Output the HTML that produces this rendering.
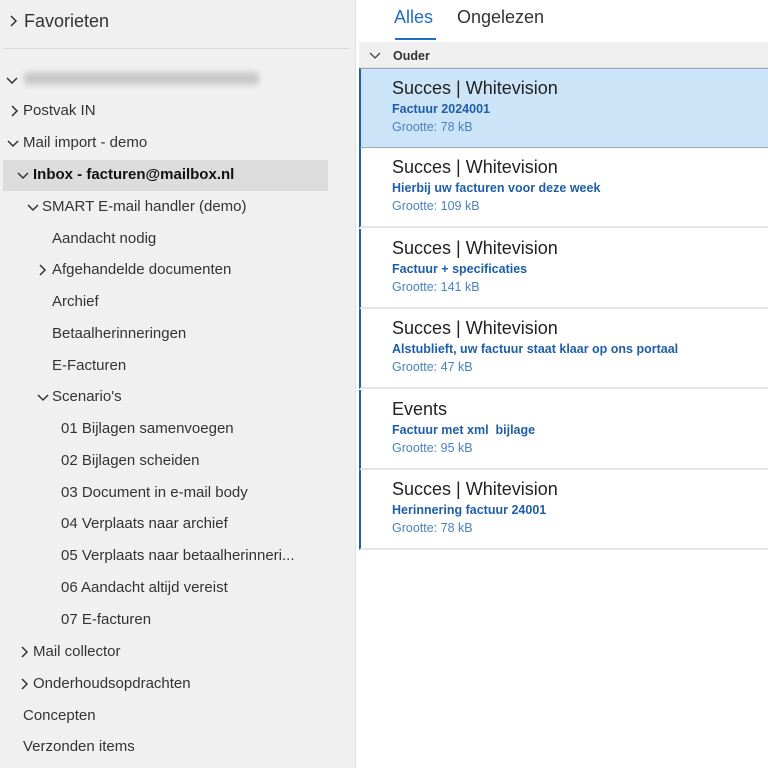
<!DOCTYPE html>
<html><head><meta charset="utf-8"><style>
*{margin:0;padding:0;box-sizing:border-box}
body{width:768px;height:768px;overflow:hidden;background:#fff;font-family:"Liberation Sans",sans-serif;position:relative}
#left{position:absolute;left:0;top:0;width:355px;height:768px;background:#f0f0f0}
.r{position:absolute;font-size:15px;color:#333;white-space:nowrap;line-height:20px}
.c{position:absolute;width:12px;height:12px}
#right{position:absolute;left:355px;top:0;width:413px;height:768px;background:#fff;border-left:1px solid #e0e0e0}
.it{position:absolute;left:3px;width:410px;height:80px;border-left:2px solid #1f5ea8;border-bottom:2px solid #e6e6e6;background:#fff}
.it .a{position:absolute;left:31px;top:9px;font-size:18px;color:#222}
.it .b{position:absolute;left:31px;top:33px;font-size:12.5px;font-weight:bold;color:#1f5ea8}
.it .g{position:absolute;left:31px;top:51px;font-size:12.5px;color:#4a82c0}
</style></head><body>
<div id="left">
<svg width="0" height="0" style="position:absolute"><defs>
<path id="rt" d="M3 1 L8 6 L3 11" fill="none" stroke="#333" stroke-width="1.5"/>
<path id="dn" d="M1 4 L6 9 L11 4" fill="none" stroke="#333" stroke-width="1.5"/>
</defs></svg>
<svg class="c" style="left:8px;top:15px"><use href="#rt"/></svg>
<div class="r" style="left:24px;top:11px;font-size:18px">Favorieten</div>
<div style="position:absolute;left:3px;top:48px;width:347px;height:1px;background:#d8d8d8"></div>
<svg class="c" style="left:6px;top:74px"><use href="#dn"/></svg>
<div style="position:absolute;left:24px;top:72px;width:235px;height:13px;background:#c9c9c9;filter:blur(3px);border-radius:4px"></div>
<svg class="c" style="left:9px;top:105px"><use href="#rt"/></svg><div class="r" style="left:23px;top:101px">Postvak IN</div>
<svg class="c" style="left:7px;top:137px"><use href="#dn"/></svg><div class="r" style="left:23px;top:133px">Mail import - demo</div>
<div style="position:absolute;left:3px;top:160px;width:325px;height:31px;background:#dcdcdc"></div>
<svg class="c" style="left:17px;top:169px"><use href="#dn"/></svg><div class="r" style="left:33px;top:165px;font-weight:bold;color:#111">Inbox - facturen@mailbox.nl</div>
<svg class="c" style="left:27px;top:201px"><use href="#dn"/></svg><div class="r" style="left:42px;top:197px">SMART E-mail handler (demo)</div>
<div class="r" style="left:52px;top:229px">Aandacht nodig</div>
<svg class="c" style="left:37px;top:264px"><use href="#rt"/></svg><div class="r" style="left:52px;top:260px">Afgehandelde documenten</div>
<div class="r" style="left:52px;top:292px">Archief</div>
<div class="r" style="left:52px;top:324px">Betaalherinneringen</div>
<div class="r" style="left:52px;top:356px">E-Facturen</div>
<svg class="c" style="left:37px;top:391px"><use href="#dn"/></svg><div class="r" style="left:52px;top:387px">Scenario's</div>
<div class="r" style="left:61px;top:419px">01 Bijlagen samenvoegen</div>
<div class="r" style="left:61px;top:451px">02 Bijlagen scheiden</div>
<div class="r" style="left:61px;top:483px">03 Document in e-mail body</div>
<div class="r" style="left:61px;top:514px">04 Verplaats naar archief</div>
<div class="r" style="left:61px;top:546px">05 Verplaats naar betaalherinneri...</div>
<div class="r" style="left:61px;top:578px">06 Aandacht altijd vereist</div>
<div class="r" style="left:61px;top:610px">07 E-facturen</div>
<svg class="c" style="left:19px;top:646px"><use href="#rt"/></svg><div class="r" style="left:33px;top:642px">Mail collector</div>
<svg class="c" style="left:19px;top:678px"><use href="#rt"/></svg><div class="r" style="left:33px;top:674px">Onderhoudsopdrachten</div>
<div class="r" style="left:23px;top:706px">Concepten</div>
<div class="r" style="left:23px;top:737px">Verzonden items</div>
</div>
<div id="right">
<div class="r" style="left:38px;top:7px;font-size:18px;color:#1f6fc5">Alles</div>
<div style="position:absolute;left:39px;top:38px;width:41px;height:2px;background:#1f6fc5"></div>
<div class="r" style="left:101px;top:7px;font-size:18px;color:#333">Ongelezen</div>
<div style="position:absolute;left:3px;top:42px;width:410px;height:26px;background:#f0f0f0;border-bottom:1px solid #ddd"></div>
<svg class="c" style="left:13px;top:49px"><path d="M1 4 L6 9 L11 4" fill="none" stroke="#444" stroke-width="1.3"/></svg>
<div class="r" style="left:37px;top:46px;font-size:12.5px;font-weight:bold;color:#333">Ouder</div>
<div class="it" style="top:68px;background:#cce4f7;border:1px solid #9ab;border-left:2px solid #1f5ea8"><div class="a">Succes | Whitevision</div><div class="b">Factuur 2024001</div><div class="g">Grootte: 78 kB</div></div>
<div class="it" style="top:148px"><div class="a">Succes | Whitevision</div><div class="b">Hierbij uw facturen voor deze week</div><div class="g">Grootte: 109 kB</div></div>
<div class="it" style="top:229px"><div class="a">Succes | Whitevision</div><div class="b">Factuur + specificaties</div><div class="g">Grootte: 141 kB</div></div>
<div class="it" style="top:309px"><div class="a">Succes | Whitevision</div><div class="b">Alstublieft, uw factuur staat klaar op ons portaal</div><div class="g">Grootte: 47 kB</div></div>
<div class="it" style="top:390px"><div class="a">Events</div><div class="b">Factuur met xml&nbsp; bijlage</div><div class="g">Grootte: 95 kB</div></div>
<div class="it" style="top:470px"><div class="a">Succes | Whitevision</div><div class="b">Herinnering factuur 24001</div><div class="g">Grootte: 78 kB</div></div>
</div>
</body></html>
